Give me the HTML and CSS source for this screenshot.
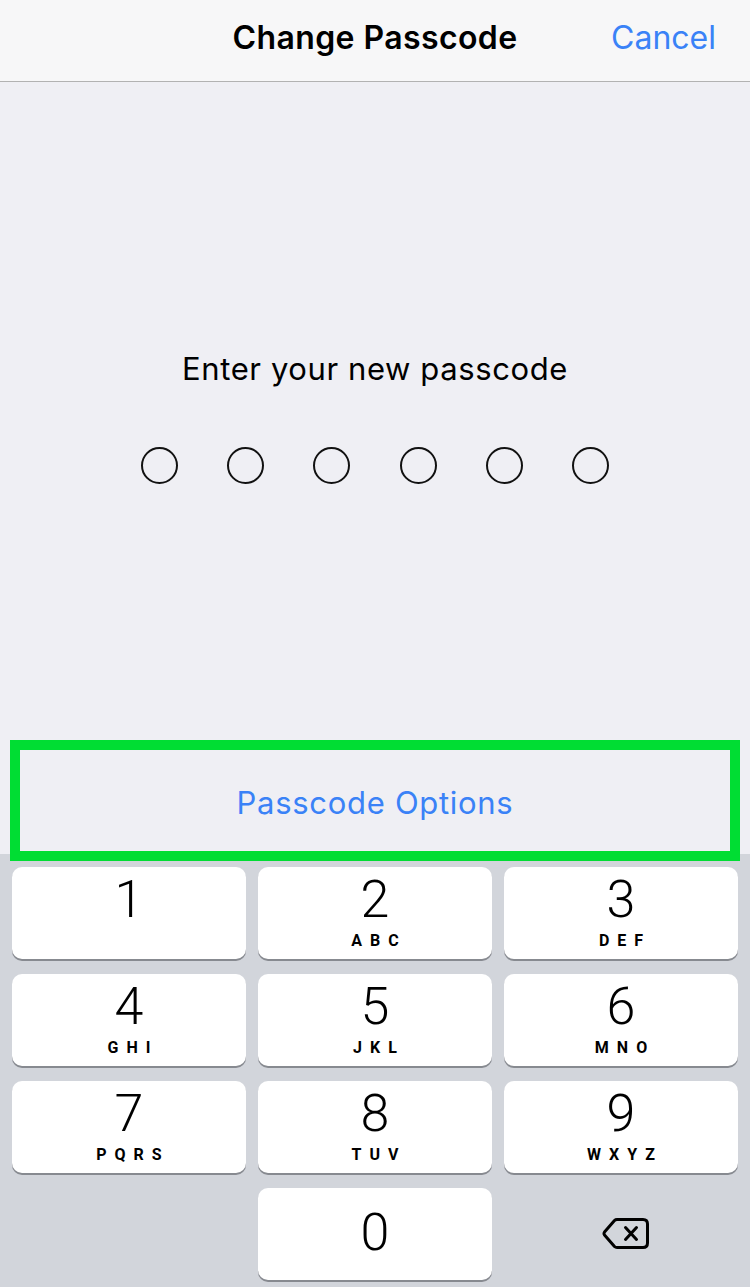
FILE: index.html
```html
<!DOCTYPE html>
<html>
<head>
<meta charset="utf-8">
<link rel="stylesheet" href="styles.css">
</head>
<body>
<div class="screen">
  <header class="navbar">
    <div class="title">Change Passcode</div>
    <div class="cancel">Cancel</div>
  </header>
  <main class="main">
    <div class="prompt">Enter your new passcode</div>
    <div class="dots">
      <span class="dot"></span><span class="dot"></span><span class="dot"></span>
      <span class="dot"></span><span class="dot"></span><span class="dot"></span>
    </div>
    <div class="options">Passcode Options</div>
  </main>
  <section class="keyboard">
    <div class="key"><span class="digit">1</span></div>
    <div class="key"><span class="digit">2</span><span class="letters">ABC</span></div>
    <div class="key"><span class="digit">3</span><span class="letters">DEF</span></div>
    <div class="key"><span class="digit">4</span><span class="letters">GHI</span></div>
    <div class="key"><span class="digit">5</span><span class="letters">JKL</span></div>
    <div class="key"><span class="digit">6</span><span class="letters">MNO</span></div>
    <div class="key"><span class="digit">7</span><span class="letters">PQRS</span></div>
    <div class="key"><span class="digit">8</span><span class="letters">TUV</span></div>
    <div class="key"><span class="digit">9</span><span class="letters">WXYZ</span></div>
    <div class="key empty"></div>
    <div class="key zero"><span class="digit">0</span></div>
    <div class="key delete">
      <svg width="48" height="35" viewBox="0 0 48 35" fill="none" stroke="#000" stroke-width="3" stroke-linejoin="round" stroke-linecap="round">
        <path d="M15 3.5 H41 Q45.5 3.5 45.5 8 V27 Q45.5 31.5 41 31.5 H15 Q13.5 31.5 12.5 30.5 L2.5 19 Q1.5 17.5 2.5 16 L12.5 4.5 Q13.5 3.5 15 3.5 Z"/>
        <path d="M23.5 11.5 L34.5 23.5 M34.5 11.5 L23.5 23.5"/>
      </svg>
    </div>
  </section>
</div>
</body>
</html>
```
FILE: styles.css
```css
* { box-sizing: border-box; }
html, body { margin: 0; padding: 0; }
body {
  width: 750px;
  height: 1287px;
  overflow: hidden;
  font-family: Inter, Roboto, "Liberation Sans", Arial, sans-serif;
  color: #000;
  background: #efeff4;
}
.screen {
  display: flex;
  flex-direction: column;
  height: 1287px;
}
.navbar {
  height: 82px;
  flex: none;
  background: #f7f7f8;
  border-bottom: 1px solid #b2b2b2;
  display: flex;
  align-items: center;
  justify-content: center;
  position: relative;
  padding-bottom: 6px;
}
.title {
  font-size: 32px;
  font-weight: 600;
  letter-spacing: 0.4px;
}
.cancel {
  position: absolute;
  right: 34px;
  top: 18px;
  font-size: 32px;
  color: #3a82f7;
}
.main {
  flex: none;
  height: 772px;
  display: flex;
  flex-direction: column;
  align-items: center;
  padding-top: 267px;
  position: relative;
  z-index: 1;
}
.prompt {
  font-size: 31px;
  line-height: 40px;
  height: 40px;
  letter-spacing: 0.6px;
}
.dots {
  display: flex;
  gap: 49.2px;
  margin-top: 58px;
}
.dot {
  width: 37px;
  height: 37px;
  border: 2.5px solid #111;
  border-radius: 50%;
}
.options {
  margin-top: auto;
  margin-bottom: -7px;
  width: 730px;
  height: 121px;
  border: 10px solid #00dd33;
  display: flex;
  align-items: center;
  justify-content: center;
  font-size: 31px;
  letter-spacing: 0.7px;
  color: #3a82f7;
  background: #efeff4;
  padding-top: 4px;
}
.keyboard {
  flex: 1;
  background: #d2d5db;
  display: grid;
  grid-template-columns: repeat(3, 234px);
  grid-auto-rows: 92px;
  column-gap: 12px;
  row-gap: 15px;
  padding: 13px 12px 7px;
}
.key {
  background: #fff;
  border-radius: 10px;
  box-shadow: 0 2px 0 #878a90;
  display: flex;
  flex-direction: column;
  align-items: center;
  padding-top: 7px;
}
.key.zero {
  justify-content: center;
  padding-top: 0;
  padding-bottom: 2px;
}
.key.empty, .key.delete {
  background: transparent;
  box-shadow: none;
}
.key.delete {
  justify-content: center;
  padding: 0 0 2px 10px;
}
.digit {
  font-family: Roboto, "Liberation Sans", Arial, sans-serif;
  font-size: 52px;
  line-height: 52px;
  font-weight: 300;
}
.letters {
  margin-top: 5px;
  font-family: Roboto, "Liberation Sans", Arial, sans-serif;
  font-size: 16px;
  line-height: 20px;
  font-weight: 700;
  letter-spacing: 8px;
  padding-left: 8px;
}
```
